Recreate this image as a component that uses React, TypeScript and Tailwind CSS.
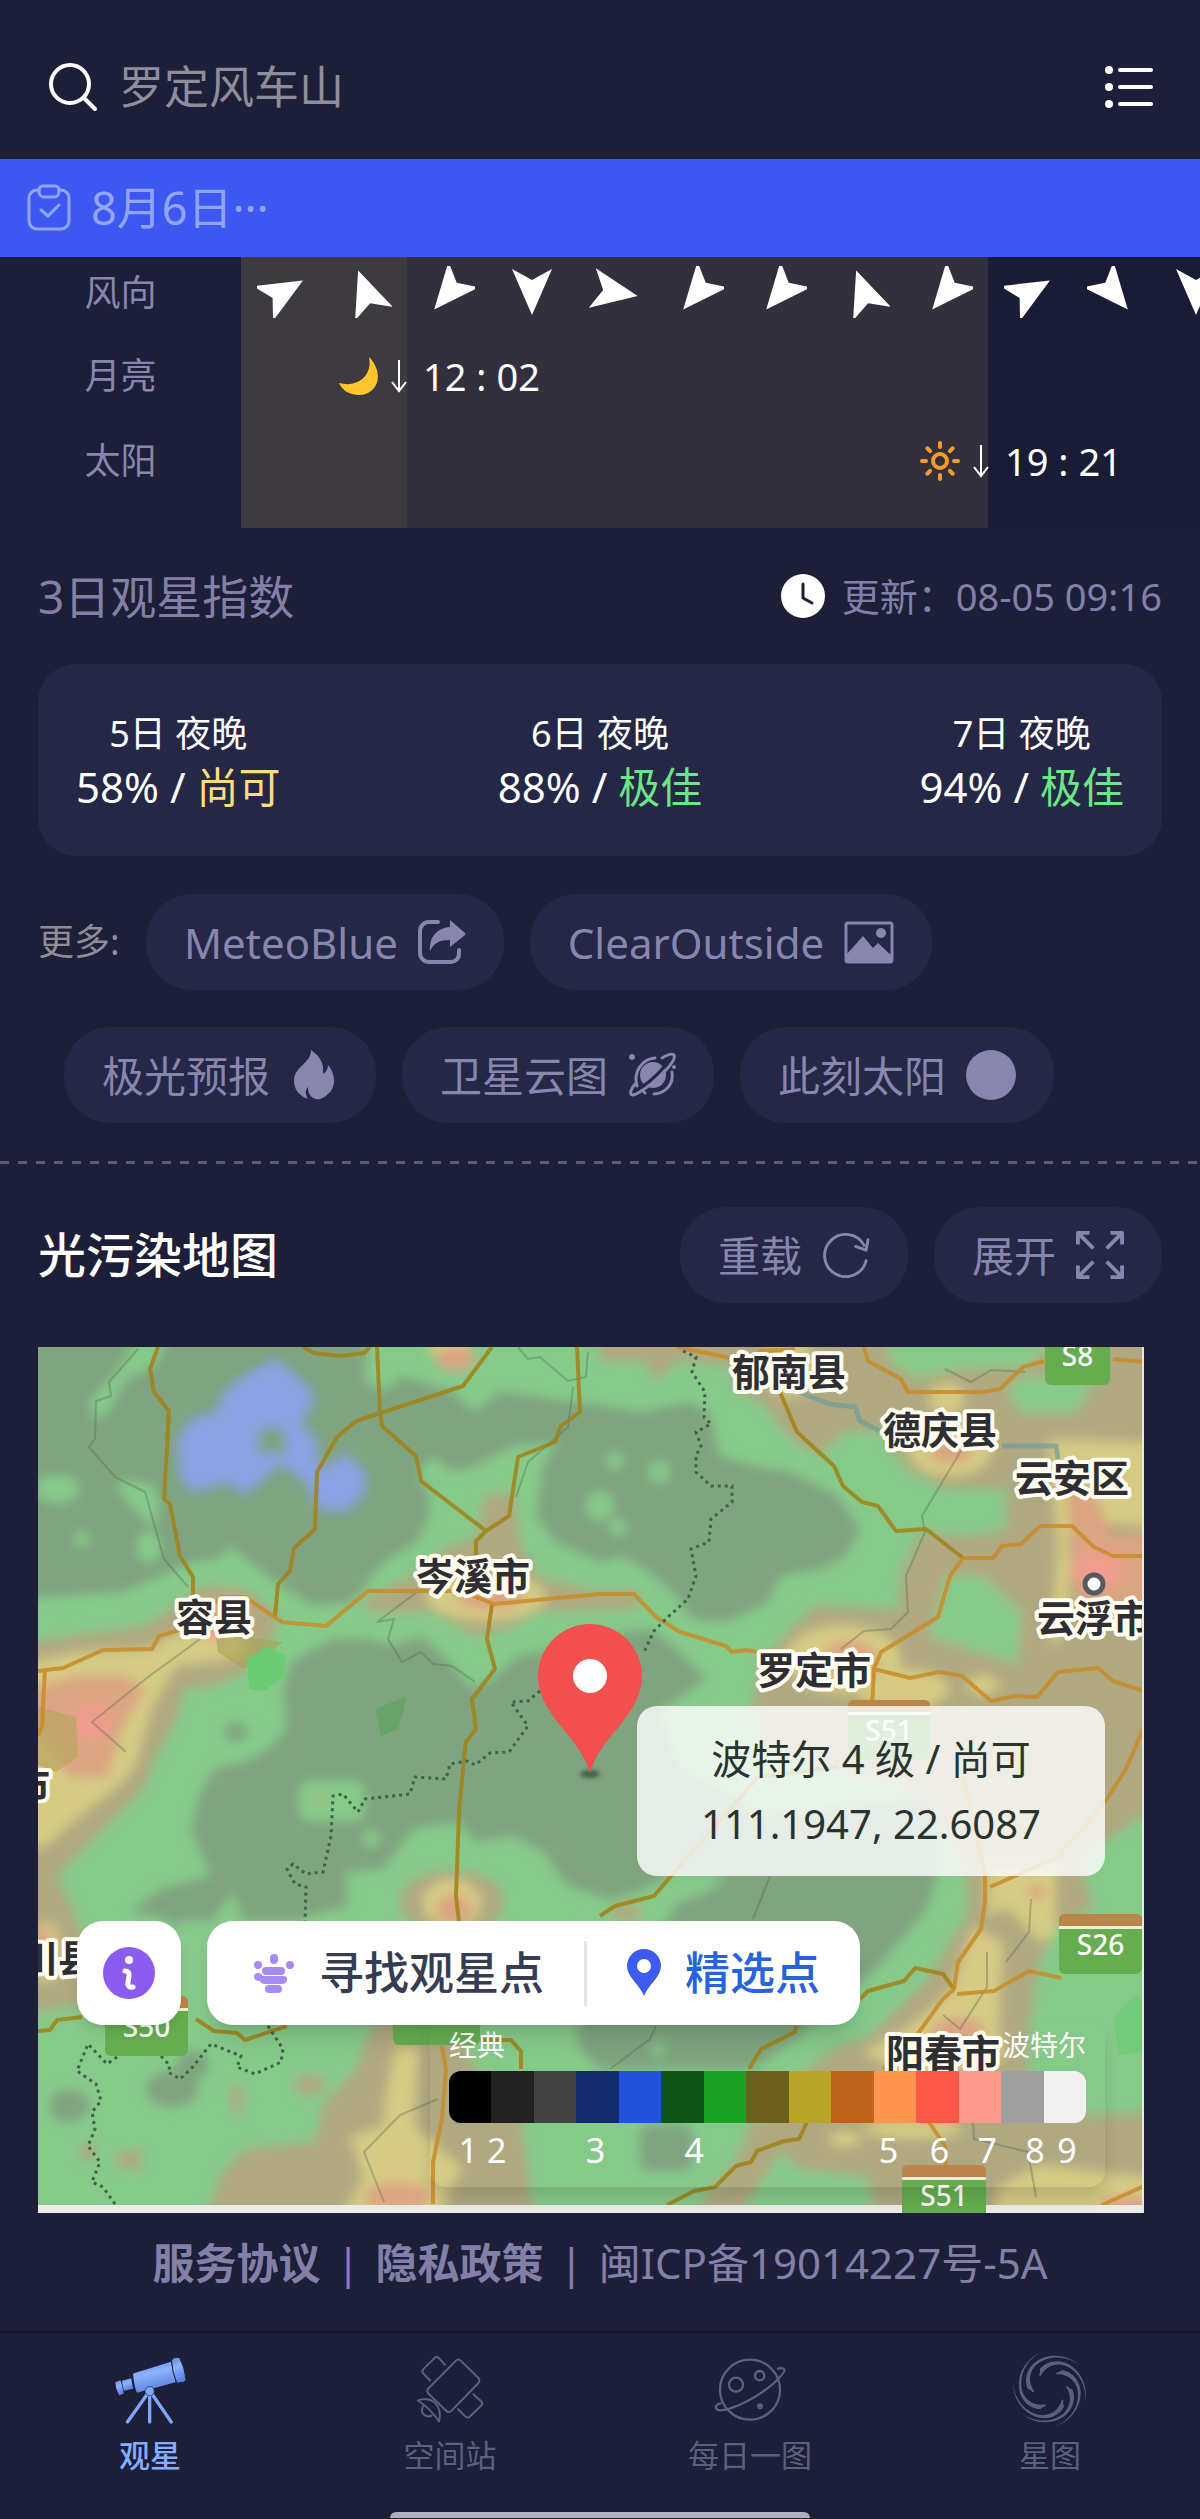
import type { ReactNode } from "react";

const COLUMN_COUNT = 12;
const WIND_DIRECTIONS = [60, -20, 220, 180, 100, 220, 220, -20, 220, 60, 140, 180];

type NightScore = {
  day: string;
  percent: number;
  rating: string;
  ratingClassName: string;
};

const NIGHT_SCORES: NightScore[] = [
  { day: "5日 夜晚", percent: 58, rating: "尚可", ratingClassName: "text-[#fddc80]" },
  { day: "6日 夜晚", percent: 88, rating: "极佳", ratingClassName: "text-[#6be585]" },
  { day: "7日 夜晚", percent: 94, rating: "极佳", ratingClassName: "text-[#6be585]" },
];

const LEGEND_COLORS = [
  "#000000",
  "#222222",
  "#424242",
  "#132c70",
  "#2252d8",
  "#0e5515",
  "#1da228",
  "#6b611c",
  "#b8a628",
  "#bf621a",
  "#ff954e",
  "#fc5848",
  "#fb998d",
  "#9f9f9f",
  "#f1f1f1",
];

const BORTLE_TICKS = [
  { level: 1, percent: 3 },
  { level: 2, percent: 7.5 },
  { level: 3, percent: 23 },
  { level: 4, percent: 38.5 },
  { level: 5, percent: 69 },
  { level: 6, percent: 77 },
  { level: 7, percent: 84.5 },
  { level: 8, percent: 92 },
  { level: 9, percent: 97 },
];

const MAP_LABELS = [
  { text: "郁南县", x: 694, y: 24 },
  { text: "德庆县", x: 845, y: 82 },
  { text: "云安区", x: 977, y: 130 },
  { text: "云浮市", x: 999, y: 270 },
  { text: "罗定市", x: 719, y: 322 },
  { text: "岑溪市", x: 378, y: 228 },
  { text: "容县", x: 138, y: 269 },
  { text: "阳春市", x: 848, y: 705 },
  { text: "市", x: -26, y: 437 },
  { text: "川县", x: -18, y: 610 },
];

const MAP_ROADS = [
  "120,0 112,22 116,45 131,64 126,152 132,157 142,209 155,230 155,255",
  "265,0 276,6 303,9 326,6 332,0",
  "339,0 342,65 344,79 378,109 383,134 448,184",
  "454,0 425,39 318,74 299,90 279,125 277,182 256,201 252,224 240,237 237,269",
  "539,0 542,65 523,79 517,95 480,110 471,169 448,184 438,194 438,215",
  "158,672 176,684 199,686 207,693 249,679",
  "454,257 449,292 457,322 434,352 438,382 428,395 425,422 421,465 418,549 421,574",
  "742,45 759,85 796,119 805,139 824,155 840,159 858,184 888,182 925,211",
  "822,652 830,644 866,634 877,621 905,627 916,642",
  "562,569 577,559 616,549 633,529 720,430 800,420",
  "758,679 757,685 723,702 711,722",
  "769,775 761,792 746,794 719,804 713,815 698,819 677,840 656,844 629,858",
  "442,693 473,693 483,704 483,722",
  "0,684 12,683 19,673 44,670",
];

const MAP_HIGHWAYS = [
  "0,324 25,321 65,303 114,302 121,289 138,284 173,259 184,250 207,250 244,275 288,279 330,244 422,244 456,257 562,247 596,247 618,270 642,285 688,299 694,305 708,303 731,307",
  "7,322 4,379 0,389",
  "925,211 955,211 964,199 983,197 1002,179 1034,179 1056,200 1075,209 1106,209",
  "925,211 912,229 900,270 843,305 836,322 872,331 901,325 924,329 953,354 976,349 999,350 1020,325 1060,321 1075,334 1106,344",
  "836,322 834,360",
  "639,0 688,10 742,45 719,14 723,4 757,2",
  "826,0 830,14 863,32 870,45 945,45 962,42 985,20 1006,14",
  "1075,12 1106,15",
  "925,430 947,529 947,555 943,582 920,615 916,642 905,652 878,689 845,722",
  "919,647 956,644 991,624 1023,631",
  "1106,380 1088,422 1069,452 1020,510 952,540",
  "891,775 907,799 908,818",
  "1064,858 1106,839",
  "404,699 408,722 404,772 395,815 395,857",
];

const MAP_BORDERS = [
  "645,4 658,10 654,25 667,45 666,70 673,77 658,85 663,99 658,109 658,125 673,139 694,139 694,155 673,172 671,195 653,202 658,229 650,252 631,269 616,284 606,305",
  "502,344 490,354 473,355 490,379 471,405 452,406 437,418 429,414 412,417 408,432 377,430 372,447 327,452 320,465 305,447 295,449 293,489 285,525 268,527 255,517 249,522 257,537 268,540 267,574",
  "230,679 245,702 243,715 217,727 199,720 203,709 173,697 153,722 142,732 130,725 132,719 123,709",
  "79,710 69,717 50,697 39,724 58,737 63,754 54,765 57,782 50,799 62,815 54,835 65,840 77,857",
];

const MAP_MINOR_LINES = [
  "100,2 71,35 73,49 58,54 57,92 51,100 77,130 107,145 126,212 150,240",
  "480,0 490,12 502,10 530,34 548,30 550,5",
  "535,40 530,80 490,115 478,150",
  "907,22 933,35 953,23 987,25",
  "924,102 884,169 887,185 868,229 870,265 853,282 826,284 803,302",
  "379,245 339,275 356,272 350,292 364,315 383,305 395,317 414,319 437,335",
  "88,405 54,375 110,330 165,290",
  "993,552 991,585 968,615",
  "949,605 949,640 922,682 905,668",
  "732,529 715,572",
  "618,679 612,692 572,722",
  "400,752 362,768 326,805 346,855",
  "935,775 936,792 990,805 998,850",
];

function LightPollutionMap() {
  return (
    <svg viewBox="0 0 1106 866" className="block h-auto w-full" role="img" aria-label="光污染地图">
      <defs>
        <filter id="soft" x="-10%" y="-10%" width="120%" height="120%">
          <feGaussianBlur stdDeviation="6" />
        </filter>
        <filter id="shade" x="-50%" y="-50%" width="200%" height="200%">
          <feGaussianBlur stdDeviation="2" />
        </filter>
      </defs>

      <rect width="1106" height="866" fill="#86ca8a" />

      <g filter="url(#soft)">
        <g fill="#80a380">
          <path d="M-20-20H330L326 35 345 45 364 29 414 45 437 65 460 45 498 49 530 55 562 58 600 65 654 55 673 69 681 109 715 119 753 125 799 149 822 182 807 209 784 222 742 229 730 255 688 275 654 272 639 249 616 229 585 209 562 215 517 195 498 169 506 115 521 95 475 99 437 119 414 125 395 109 379 125 391 149 391 169 379 195 345 215 314 255 276 259 253 245 230 229 192 199 180 212 153 215 123 229 85 245-20 252Z" />
          <path d="M295 292L330 292 356 299 383 289 406 309 433 342 452 335 479 309 521 302 562 289 608 282 627 292 669 332 639 352 619 365 640 420 730 470 900 450 899 529 887 565 861 595 838 622 790 660 761 690 715 722H562L544 705 536 682 640 600 562 549 529 539 506 505 475 489 437 495 421 475 375 482 345 522 307 525 310 559 268 569 260 590 150 600 130 572 92 565 123 542 173 529 153 482 161 449 176 422 207 415 230 402 249 382 245 342 253 315Z" />
          <ellipse cx="31" cy="759" rx="20" ry="16" />
          <ellipse cx="134" cy="742" rx="26" ry="18" />
          <ellipse cx="155" cy="718" rx="16" ry="14" />
          <rect x="602" y="778" width="52" height="46" rx="8" />
          <ellipse cx="198" cy="385" rx="12" ry="9" />
        </g>

        <g fill="#86ca8a">
          <path d="M100-10L130-10 118 18 88 32 68 68 54 72 52 55 78 25Z" />
          <ellipse cx="19" cy="142" rx="22" ry="14" />
          <path d="M78 132L115 138 122 160 116 182 100 165 85 150Z" />
          <ellipse cx="111" cy="200" rx="12" ry="16" />
          <circle cx="44" cy="192" r="8" />
          <circle cx="577" cy="114" r="9" />
          <circle cx="621" cy="125" r="11" />
          <circle cx="562" cy="159" r="14" />
          <circle cx="580" cy="180" r="9" />
          <rect x="261" y="434" width="66" height="40" rx="10" />
          <circle cx="333" cy="492" r="9" />
          <path d="M545 580L562 555 600 545 640 525 690 528 670 545 640 555 625 580Z" />
          <circle cx="620" cy="702" r="7" />
          <path d="M140 574H175L195 545 205 574H300V600H140Z" />
        </g>

        <g fill="#b0a880">
          <path d="M-20 296L107 279 153 249 161 239 207 242 238 265 238 285 207 325 176 339 146 342 138 375 115 415 107 440 58 489 19 529 38 569 60 655-20 668Z" />
          <path d="M445 149L475 145 483 195 498 229 562 245 600 243 600 262 498 265 471 282 437 289 395 265 326 265 330 249 376 229 406 202 441 189Z" />
          <path d="M692-20H1126V455L1075 489 1045 509V529L1056 560 1018 580 1000 620 990 690 990 770 1126 765V886H840L830 830 760 822 720 775 770 722 800 699 830 690 887 635 895 622 929 569V529L890 450 720 400 715 359 723 315 753 282 776 259 860 262 864 222 883 185 930 190 968 182V142H906L868 122 845 85H807L780 109 753 92 723 55 696 42Z" />
          <path d="M562-20H700V20L640 14 620 34 605 14 562 14Z" />
          <path d="M161 886L184 825 207 802 276 795 287 755 318 722 330 689 345 660H414L433 715 483 775 490 822 498 886Z" />
          <path d="M640 886L700 810 715 770 740 775 745 800 690 886Z" />
          <ellipse cx="414" cy="555" rx="52" ry="32" />
          <ellipse cx="588" cy="566" rx="16" ry="10" />
          <circle cx="280" cy="454" r="5" />
          <ellipse cx="272" cy="738" rx="16" ry="10" />
          <ellipse cx="199" cy="752" rx="6" ry="16" />
          <ellipse cx="92" cy="813" rx="14" ry="10" />
          <ellipse cx="50" cy="805" rx="8" ry="10" />
        </g>

        <g fill="#86ca8a">
          <path d="M845-20H1005V6L990 20 920 22 880 32 852 15Z" />
          <path d="M968 42L984 30H1056L1040 65H983Z" />
          <path d="M907 229H945L983 265 979 318 965 312 891 290 903 249Z" />
        </g>

        <g fill="#d5cb84">
          <path d="M-20 318L38 305 115 302 130 289 176 282 207 289 207 309 176 315 138 319 115 359 96 422 77 442 38 472 8 499-20 499Z" />
          <ellipse cx="8" cy="605" rx="16" ry="30" />
          <ellipse cx="448" cy="250" rx="60" ry="24" />
          <ellipse cx="412" cy="2" rx="20" ry="14" />
          <ellipse cx="909" cy="52" rx="18" ry="16" />
          <ellipse cx="912" cy="102" rx="42" ry="28" />
          <ellipse cx="752" cy="22" rx="26" ry="28" />
          <path d="M1010 92L1126 96V182L1060 175 1046 130 1030 130 1032 240 1024 290 1012 300 1020 200Z" />
          <ellipse cx="805" cy="312" rx="58" ry="34" />
          <ellipse cx="865" cy="342" rx="46" ry="20" />
          <ellipse cx="945" cy="338" rx="16" ry="10" />
          <path d="M949 520H1018V590L1002 595 968 560 950 570Z" />
          <path d="M935 580L965 595 960 690 970 710 880 735 825 705 870 680 912 645Z" />
          <ellipse cx="807" cy="792" rx="16" ry="8" />
          <ellipse cx="875" cy="782" rx="50" ry="10" />
          <path d="M960 840L1000 818 1126 832V886H960Z" />
          <path d="M358 700L380 700 376 780 392 792 425 822 410 842 405 886H296L325 830 312 790 345 778 348 745Z" />
          <ellipse cx="414" cy="556" rx="30" ry="24" />
        </g>

        <g fill="#dba482">
          <path d="M-20 345L38 329 88 329 107 342 84 382 69 430 31 430-20 365Z" />
          <ellipse cx="185" cy="268" rx="28" ry="16" />
          <ellipse cx="452" cy="248" rx="34" ry="14" />
          <ellipse cx="418" cy="12" rx="20" ry="12" />
          <path d="M1028 145H1056L1075 190 1126 186V240L1100 265 1042 262Z" />
          <ellipse cx="912" cy="104" rx="22" ry="12" />
          <ellipse cx="812" cy="314" rx="28" ry="20" />
          <ellipse cx="920" cy="684" rx="28" ry="13" />
          <ellipse cx="999" cy="545" rx="8" ry="8" />
          <ellipse cx="360" cy="850" rx="34" ry="14" />
          <ellipse cx="5" cy="602" rx="10" ry="20" />
          <ellipse cx="416" cy="562" rx="18" ry="14" />
          <ellipse cx="1090" cy="860" rx="30" ry="12" />
        </g>

        <g fill="#f09c8e">
          <circle cx="54" cy="374" r="18" />
          <ellipse cx="178" cy="284" rx="10" ry="10" />
          <ellipse cx="1058" cy="222" rx="26" ry="18" />
          <ellipse cx="812" cy="316" rx="14" ry="10" />
        </g>

        <path
          fill="#8ba2e4"
          d="M184 49L207 29 238 13 261 32 276 49 262 79 276 89 280 118 290 122 307 106 328 129 324 149 307 164 280 161 268 134 242 116 222 134 207 147 192 135 153 144 143 129 140 95 153 73 180 65Z"
        />
        <rect x="220" y="81" width="28" height="26" rx="5" fill="#80a380" />
      </g>

      <path fill="#b8a55f" opacity="0.7" d="M0 360L38 370 40 410 18 425 0 418Z" />
      <path fill="#a9a253" opacity="0.6" d="M178 290H206L245 295 225 312 205 322 180 305Z" />
      <path fill="#6bcb74" d="M209 312L230 299 247 309V329L226 344 211 342Z" />
      <path fill="#68a368" d="M337 362L368 350 366 362 360 382 343 389Z" />
      <path fill="#6bcb74" opacity="0.7" d="M1076 670L1096 648 1106 655V705L1080 708Z" />

      <g fill="none" stroke="#6f9f9c" strokeWidth="5" opacity="0.7">
        <polyline points="761,45 792,57 817,60 822,74 842,84" />
        <polyline points="964,99 1018,99 1020,112" />
      </g>
      <g fill="none" stroke="#4d6653" strokeWidth="2" opacity="0.35">
        {MAP_MINOR_LINES.map((points) => (
          <polyline key={points} points={points} />
        ))}
      </g>
      <g fill="none" stroke="#a18318" strokeWidth="4" strokeLinejoin="round" opacity="0.85">
        {MAP_ROADS.map((points) => (
          <polyline key={points} points={points} />
        ))}
      </g>
      <g fill="none" stroke="#c98c28" strokeWidth="4" strokeLinejoin="round" opacity="0.85">
        {MAP_HIGHWAYS.map((points) => (
          <polyline key={points} points={points} />
        ))}
      </g>
      <g fill="none" stroke="#3f6347" strokeWidth="3" strokeDasharray="3 4">
        {MAP_BORDERS.map((points) => (
          <polyline key={points} points={points} />
        ))}
      </g>

      <RoadShield x={1007} y={-22} code="S8" width={65} />
      <RoadShield x={810} y={353} code="S51" width={82} />
      <RoadShield x={1021} y={567} code="S26" width={83} />
      <RoadShield x={67} y={649} code="S50" width={83} />
      <RoadShield x={355} y={638} code="" width={87} />

      <circle cx="1056" cy="237" r="9" fill="#fff" stroke="#555a5e" strokeWidth="5" />
      <g
        fontSize="38"
        fontWeight="700"
        fill="#2f2f33"
        stroke="#fffdf0"
        strokeWidth="8"
        strokeLinejoin="round"
        style={{ paintOrder: "stroke" }}
        dominantBaseline="central"
      >
        {MAP_LABELS.map(({ text, x, y }) => (
          <text key={`${text}-${x}`} x={x} y={y}>
            {text}
          </text>
        ))}
      </g>

      <rect y="858" width="1106" height="8" fill="#ebebe7" />
      <RoadShield x={864} y={818} code="S51" width={84} />
      <rect x="1104" width="2" height="866" fill="#e6e8dc" />

      <ellipse cx="552" cy="427" rx="10" ry="4" fill="#3d6044" filter="url(#shade)" />
      <path
        d="M552 426C545 402 528 387 515 369 506 356 500 344 500 329A52 52 0 0 1 604 329C604 344 598 356 589 369 576 387 559 402 552 426Z"
        fill="#f24f4f"
      />
      <circle cx="552" cy="329" r="17" fill="#fff" />
    </svg>
  );
}

type RoadShieldProps = { x: number; y: number; width: number; code: string };

function RoadShield({ x, y, width, code }: RoadShieldProps) {
  return (
    <g>
      <rect x={x} y={y} width={width} height="60" rx="6" fill="#66ad50" />
      <path d={`M${x} ${y + 12}v-6q0-6 6-6h${width - 12}q6 0 6 6v6Z`} fill="#b9854a" />
      <rect x={x} y={y + 12} width={width} height="3" fill="#f1efd8" />
      <text x={x + width / 2} y={y + 30} fontSize="28" fontWeight="500" fill="#fff" textAnchor="middle" dominantBaseline="central">
        {code}
      </text>
    </g>
  );
}

function SearchIcon() {
  return (
    <svg viewBox="0 0 50 50" className="size-[50px]" fill="none" stroke="#fff" strokeWidth="4" strokeLinecap="round" aria-hidden="true">
      <circle cx="22" cy="22" r="19" />
      <path d="M36 36L47 47" />
    </svg>
  );
}

function MenuIcon() {
  return (
    <svg viewBox="0 0 50 46" className="h-[46px] w-[50px]" fill="#fff" aria-hidden="true">
      {[6, 23, 40].map((cy) => (
        <g key={cy}>
          <circle cx="5" cy={cy} r="4" />
          <rect x="14" y={cy - 2} width="35" height="4" rx="2" />
        </g>
      ))}
    </svg>
  );
}

function ClipboardIcon() {
  return (
    <svg viewBox="0 0 44 48" className="h-12 w-11" fill="none" stroke="#92a5fd" strokeWidth="3" strokeLinecap="round" strokeLinejoin="round" aria-hidden="true">
      <path d="M12 6H10a8 8 0 0 0-8 8v23a8 8 0 0 0 8 8h24a8 8 0 0 0 8-8V14a8 8 0 0 0-8-8h-2" />
      <path d="M16 2h12a4 4 0 0 1 4 4v2a5 5 0 0 1-5 5H17a5 5 0 0 1-5-5V6a4 4 0 0 1 4-4Z" />
      <path d="M14 26l7 6 11-11" />
    </svg>
  );
}

function WindArrow({ degrees }: { degrees: number }) {
  return (
    <svg viewBox="-26 -26 52 52" className="mx-auto size-[52px]" role="img" aria-label={`风向 ${degrees}°`}>
      <path d="M0-23L20 23 0 12-20 23Z" fill="#fff" transform={`rotate(${degrees})`} />
    </svg>
  );
}

function DownArrowIcon() {
  return (
    <svg viewBox="0 0 16 34" className="h-[34px] w-4" fill="none" stroke="#fff" strokeWidth="2" aria-hidden="true">
      <path d="M8 1V32M1 23l7 9 7-9" />
    </svg>
  );
}

function MoonIcon() {
  return (
    <svg viewBox="0 0 40 40" className="size-10" aria-hidden="true">
      <path d="M30 1C46 17 39 39 20 39 10 39 3 34 0 27 18 32 34 20 30 1Z" fill="#fdc62c" />
    </svg>
  );
}

function SunIcon() {
  return (
    <svg viewBox="-21 -21 42 42" className="size-[42px]" fill="none" stroke="#f9992b" strokeLinecap="round" aria-hidden="true">
      <circle r="7" strokeWidth="4" />
      {Array.from({ length: 8 }).map((_, index) => (
        <path key={index} d="M0-18v4" strokeWidth="4" transform={`rotate(${index * 45})`} />
      ))}
    </svg>
  );
}

function ClockIcon() {
  return (
    <svg viewBox="0 0 46 46" className="size-[46px]" aria-hidden="true">
      <circle cx="23" cy="23" r="22" fill="#fff" />
      <path d="M23 11v14l9 5" fill="none" stroke="#1d1e37" strokeWidth="3" strokeLinecap="round" strokeLinejoin="round" />
    </svg>
  );
}

function ShareIcon() {
  return (
    <svg viewBox="0 0 48 46" className="h-[46px] w-12" aria-hidden="true">
      <path d="M20 3H11a9 9 0 0 0-9 9v22a9 9 0 0 0 9 9h22a8 8 0 0 0 8-8v-4" fill="none" stroke="currentColor" strokeWidth="4" strokeLinecap="round" />
      <path d="M32 1L47 14Q48 15 47 16L32 28V21C21 21 16 24 12 32 11 18 19 9 32 8Z" fill="currentColor" />
    </svg>
  );
}

function ImageIcon() {
  return (
    <svg viewBox="0 0 50 43" className="h-[43px] w-[50px]" aria-hidden="true">
      <rect x="2" y="2" width="46" height="39" rx="2" fill="none" stroke="currentColor" strokeWidth="3" />
      <path d="M2 34L19 15 29 27 34 22 48 35V41H2Z" fill="currentColor" />
      <circle cx="37" cy="12" r="5" fill="currentColor" />
    </svg>
  );
}

function FlameIcon() {
  return (
    <svg viewBox="0 0 48 50" className="h-[50px] w-12" aria-hidden="true">
      <path
        d="M21 0C31 7 34 14 33 24 36 22 38 19 38 15 46 24 46 38 38 44 34 48 30 50 26 49 21 48 18 44 18 37 15 40 15 44 18 49 9 46 4 39 4 31 4 16 21 14 21 0Z"
        fill="currentColor"
      />
    </svg>
  );
}

function RingedPlanetIcon() {
  return (
    <svg viewBox="0 0 48 46" className="h-[46px] w-12" fill="none" stroke="currentColor" strokeWidth="3" strokeLinecap="round" aria-hidden="true">
      <circle cx="25" cy="23" r="13" fill="currentColor" stroke="none" />
      <path d="M9 34C5 20 14 7 27 6M34 6C39 3 44 1 46 3 49 9 32 25 19 35 11 41 4 45 3 42 2 40 4 36 7 32" />
      <path d="M44 20C46 32 38 41 26 42M17 41l-1-1" />
      <path d="M39 11C33 19 24 28 14 35" stroke="#242746" />
      <circle cx="4" cy="5" r="3" fill="currentColor" stroke="none" />
      <circle cx="46" cy="15" r="2" fill="currentColor" stroke="none" />
    </svg>
  );
}

function SolidDiscIcon() {
  return (
    <svg viewBox="0 0 50 50" className="size-[50px]" aria-hidden="true">
      <circle cx="25" cy="25" r="25" fill="currentColor" />
    </svg>
  );
}

function ReloadIcon() {
  return (
    <svg viewBox="0 0 50 48" className="h-[46px] w-12" fill="none" stroke="currentColor" strokeWidth="3" strokeLinecap="round" strokeLinejoin="round" aria-hidden="true">
      <path d="M46 30A22 22 0 1 1 44 14" />
      <path d="M48 8L46 19 35 15" />
    </svg>
  );
}

function ExpandIcon() {
  return (
    <svg viewBox="0 0 50 50" className="size-12" fill="none" stroke="currentColor" strokeWidth="4" strokeLinejoin="round" aria-hidden="true">
      <path d="M2 14V2H14M2 2L18 18M36 2H48V14M48 2L32 18M2 36V48H14M2 48L18 32M48 36V48H36M48 48L32 32" />
    </svg>
  );
}

function InfoIcon() {
  return (
    <svg viewBox="0 0 52 52" className="size-[52px]" aria-hidden="true">
      <circle cx="26" cy="26" r="26" fill="#8b5cf0" />
      <circle cx="26" cy="13" r="4" fill="#fff" />
      <path d="M22 24Q27 24 26 29L25 35Q24 41 30 40" fill="none" stroke="#fff" strokeWidth="5" strokeLinecap="round" strokeLinejoin="round" />
    </svg>
  );
}

function StarSpotIcon() {
  return (
    <svg viewBox="0 0 42 40" className="h-10 w-[42px]" fill="#a78bf5" aria-hidden="true">
      <rect x="17" y="1" width="8" height="10" rx="4" />
      <circle cx="5" cy="12" r="4" />
      <circle cx="37" cy="12" r="4" />
      <rect x="9" y="14" width="23" height="8" rx="4" />
      <path d="M5 20Q9 20 9 23H30Q35 23 34 27 33 31 29 31H12Q8 31 7 28 1 28 1 24 1 20 5 20Z" />
      <rect x="12" y="32" width="17" height="8" rx="4" />
    </svg>
  );
}

function SpotPinIcon() {
  return (
    <svg viewBox="0 0 34 48" className="h-12 w-[34px]" aria-hidden="true">
      <path d="M17 47C13 36 0 28 0 17A17 17 0 0 1 34 17C34 28 21 36 17 47ZM17 10A7 7 0 1 0 17 24 7 7 0 0 0 17 10Z" fill="#3d5af1" fillRule="evenodd" />
    </svg>
  );
}

function TelescopeIcon() {
  return (
    <svg viewBox="70 50 225 220" className="h-[73px] w-[75px]" aria-hidden="true">
      <defs>
        <linearGradient id="tube" x1="0" y1="0" x2="0.3" y2="1">
          <stop offset="0" stopColor="#5f86e0" />
          <stop offset="0.45" stopColor="#8db2ff" />
          <stop offset="1" stopColor="#5a80dc" />
        </linearGradient>
      </defs>
      <path d="M172 175L113 258M180 178V258M188 175L245 258" fill="none" stroke="#80a6f6" strokeWidth="10" strokeLinecap="round" />
      <path d="M130 112L244 76 258 138 142 170Q134 158 130 112Z" fill="url(#tube)" />
      <path d="M246 72Q250 62 262 63L270 64Q286 92 290 132L282 138 262 141Q248 112 246 72Z" fill="url(#tube)" stroke="#1d1e37" strokeWidth="3" />
      <path d="M96 134L124 126 130 158 102 164Z" fill="url(#tube)" />
      <path d="M76 138L92 132Q98 150 102 172L88 178Q78 160 76 138Z" fill="url(#tube)" />
      <circle cx="180" cy="165" r="14" fill="#80a6f6" stroke="#1d1e37" strokeWidth="2" />
    </svg>
  );
}

function SpaceStationIcon() {
  return (
    <svg viewBox="975 45 210 215" className="h-[72px] w-[70px]" fill="none" stroke="currentColor" strokeWidth="6" strokeLinecap="round" strokeLinejoin="round" aria-hidden="true">
      <path d="M1097 68Q1105 60 1113 68L1164 118Q1172 127 1164 136L1084 218Q1076 226 1068 217L1014 165Q1009 159 1015 151Z" />
      <path d="M1020 127L999 105Q995 99 1000 93L1034 59Q1040 54 1047 60L1065 80" />
      <path d="M1150 168L1175 191Q1179 197 1174 202L1139 236Q1133 240 1126 235L1104 213" />
      <path d="M984 187Q1010 176 1033 192 1056 215 1047 250 1040 238 1025 222 1010 205 984 187ZM1000 202Q990 220 1004 231 1014 238 1025 232" />
    </svg>
  );
}

function PlanetIcon() {
  return (
    <svg viewBox="100 50 225 210" className="h-[70px] w-[75px]" fill="none" stroke="currentColor" strokeWidth="7" strokeLinecap="round" aria-hidden="true">
      <circle cx="211" cy="157" r="90" />
      <circle cx="169" cy="142" r="21" />
      <circle cx="240" cy="115" r="14" />
      <circle cx="241" cy="207" r="9" fill="currentColor" stroke="none" />
      <path d="M122 198Q106 202 109 213 114 224 150 214 220 190 282 138 318 104 314 97 309 90 295 94" />
    </svg>
  );
}

function GalaxyIcon() {
  return (
    <svg viewBox="-120 -120 240 240" className="size-20" fill="currentColor" aria-hidden="true">
      {[-105, -40, 22, 82, 140, 190].map((degrees) => (
        <path
          key={degrees}
          d="M113 0C100-50 60-82 15-82-15-80-38-58-41-25-49-22-44-38-51-44-42-72-16-90 15-90 62-89 104-52 113 0Z"
          transform={`rotate(${degrees})`}
        />
      ))}
    </svg>
  );
}

type PillButtonProps = { label: string; children: ReactNode };

function PillButton({ label, children }: PillButtonProps) {
  return (
    <button type="button" className="flex h-24 items-center gap-5 rounded-[46px] bg-[#242746] px-[38px] text-[42px] text-[#8886ae]">
      <span>{label}</span>
      {children}
    </button>
  );
}

function ForecastTable() {
  return (
    <div className="overflow-hidden">
      <table className="w-[1237px] table-fixed border-collapse bg-[linear-gradient(90deg,transparent_0_241px,#3d3b3f_241px_407px,#32303c_407px_988px,#1a1c36_988px)] text-[38px] leading-none text-white">
        <colgroup>
          <col className="w-[241px]" />
          <col span={COLUMN_COUNT} />
        </colgroup>
        <tbody>
          <tr className="h-[77px]">
            <th scope="row" className="pb-1.5 text-[36px] font-normal text-[#8886ae]">
              风向
            </th>
            {WIND_DIRECTIONS.map((degrees, index) => (
              <td key={index} className="p-0 pb-2">
                <WindArrow degrees={degrees} />
              </td>
            ))}
          </tr>
          <tr className="h-[84px]">
            <th scope="row" className="text-[36px] font-normal text-[#8886ae]">
              月亮
            </th>
            <td colSpan={COLUMN_COUNT} className="p-0 pl-[98px]">
              <div className="flex items-center">
                <MoonIcon />
                <span className="ml-3 mr-4">
                  <DownArrowIcon />
                </span>
                <span>12 : 02</span>
              </div>
            </td>
          </tr>
          <tr className="h-[110px]">
            <th scope="row" className="pb-6 text-[36px] font-normal text-[#8886ae]">
              太阳
            </th>
            <td colSpan={COLUMN_COUNT} className="p-0 pb-6 pl-[678px]">
              <div className="flex items-center">
                <SunIcon />
                <span className="ml-3 mr-4">
                  <DownArrowIcon />
                </span>
                <span>19 : 21</span>
              </div>
            </td>
          </tr>
        </tbody>
      </table>
    </div>
  );
}

function BortleLegend() {
  return (
    <div className="absolute bottom-[26px] right-[39px] w-[675px] rounded-2xl px-[19px] pb-3 text-white shadow-[0_12px_16px_rgba(0,0,0,0.12)]">
      <div className="flex justify-between text-[28px] leading-[52px]">
        <span>经典</span>
        <span>波特尔</span>
      </div>
      <div className="flex h-[52px] overflow-hidden rounded-xl">
        {LEGEND_COLORS.map((color) => (
          <span key={color} className="flex-1" style={{ backgroundColor: color }} />
        ))}
      </div>
      <div className="relative h-[52px] text-[34px] leading-[54px]">
        {BORTLE_TICKS.map(({ level, percent }) => (
          <span key={level} className="absolute -translate-x-1/2" style={{ left: `${percent}%` }}>
            {level}
          </span>
        ))}
      </div>
    </div>
  );
}

function MapPanel() {
  return (
    <div className="relative ml-[38px] mr-14 mt-11 overflow-hidden">
      <LightPollutionMap />
      <BortleLegend />

      <div className="absolute right-[39px] top-[359px] w-[468px] rounded-[20px] bg-white/80 py-5 text-center text-[40px] leading-[65px] text-[#29342f]">
        <p>波特尔 4 级 / 尚可</p>
        <p>111.1947, 22.6087</p>
      </div>

      <div className="absolute bottom-[188px] left-[39px] flex gap-[26px] text-[45px] font-medium">
        <button type="button" aria-label="说明" className="flex size-[104px] items-center justify-center rounded-[26px] bg-white shadow-lg">
          <InfoIcon />
        </button>
        <div className="flex h-[104px] items-center rounded-[26px] bg-white shadow-xl">
          <button type="button" className="flex items-center gap-6 pl-[46px] pr-10 text-[#363c52]">
            <StarSpotIcon />
            <span>寻找观星点</span>
          </button>
          <span className="h-[65px] w-[3px] bg-[#e4e4e6]" />
          <button type="button" className="flex items-center gap-6 px-10 text-[#2663dc]">
            <SpotPinIcon />
            <span>精选点</span>
          </button>
        </div>
      </div>
    </div>
  );
}

type TabLinkProps = { label: string; active?: boolean; children: ReactNode };

function TabLink({ label, active = false, children }: TabLinkProps) {
  return (
    <a
      href="#"
      aria-current={active ? "page" : undefined}
      className={`flex flex-1 flex-col items-center text-[31px] leading-9 ${active ? "font-medium text-[#85adff]" : "text-[#59617d]"}`}
    >
      <span className="flex h-20 items-center">{children}</span>
      <span className="mt-2">{label}</span>
    </a>
  );
}

export default function App() {
  return (
    <div className="min-h-screen bg-[#1d1e37] font-['Noto_Sans','Noto_Sans_CJK_SC',sans-serif]">
      <header className="flex h-[159px] items-center justify-between px-12 pt-3.5">
        <label className="flex flex-1 items-center gap-[21px]">
          <SearchIcon />
          <input
            type="search"
            aria-label="搜索地点"
            placeholder="罗定风车山"
            className="h-16 min-w-0 flex-1 bg-transparent text-[45px] leading-none text-white outline-none placeholder:text-[#8e8e9b]"
          />
        </label>
        <button type="button" aria-label="菜单" className="-mr-0.5">
          <MenuIcon />
        </button>
      </header>

      <div className="flex h-[98px] items-center gap-5 bg-[#3d57f2] px-[27px] text-[45px] text-[#92a5fd]">
        <ClipboardIcon />
        <span>8月6日···</span>
      </div>

      <ForecastTable />

      <main>
        <section className="px-[38px]">
          <div className="flex h-[136px] items-center justify-between text-[#8280a8]">
            <h2 className="text-[46px]">3日观星指数</h2>
            <p className="flex items-center gap-4 text-[38px]">
              <ClockIcon />
              <span>更新：08-05 09:16</span>
            </p>
          </div>
          <ul className="flex justify-between rounded-[38px] bg-[#242746] px-[38px] py-[43px] text-center text-white">
            {NIGHT_SCORES.map(({ day, percent, rating, ratingClassName }) => (
              <li key={day}>
                <p className="text-[36px] leading-[53px]">{day}</p>
                <p className="text-[42px] leading-[53px]">
                  {percent}% / <span className={ratingClassName}>{rating}</span>
                </p>
              </li>
            ))}
          </ul>
          <div className="flex flex-wrap items-center gap-x-[26px] gap-y-[37px] py-[38px]">
            <span className="-mr-1 w-[86px] whitespace-nowrap text-[36px] text-[#8e8d95]">更多:</span>
            <PillButton label="MeteoBlue">
              <ShareIcon />
            </PillButton>
            <PillButton label="ClearOutside">
              <ImageIcon />
            </PillButton>
            <div className="flex w-full gap-[26px] pl-[26px]">
              <PillButton label="极光预报">
                <FlameIcon />
              </PillButton>
              <PillButton label="卫星云图">
                <RingedPlanetIcon />
              </PillButton>
              <PillButton label="此刻太阳">
                <SolidDiscIcon />
              </PillButton>
            </div>
          </div>
        </section>

        <div className="h-[3px] bg-[repeating-linear-gradient(90deg,#5b5c70_0_9px,transparent_9px_18px)]" />

        <section>
          <div className="flex items-center justify-between px-[38px] pt-[43px]">
            <h2 className="text-[48px] font-medium text-white">光污染地图</h2>
            <div className="flex gap-[26px]">
              <PillButton label="重载">
                <ReloadIcon />
              </PillButton>
              <PillButton label="展开">
                <ExpandIcon />
              </PillButton>
            </div>
          </div>
          <MapPanel />
        </section>
      </main>

      <footer className="flex h-[118px] items-center justify-center gap-4 whitespace-nowrap pb-5 text-[42px] text-[#8280a8]">
        <a href="#" className="font-bold">
          服务协议
        </a>
        <span>|</span>
        <a href="#" className="font-bold">
          隐私政策
        </a>
        <span>|</span>
        <a href="#">闽ICP备19014227号-5A</a>
      </footer>

      <nav className="border-t-2 border-[#14152b] pt-4">
        <div className="flex">
          <TabLink label="观星" active>
            <TelescopeIcon />
          </TabLink>
          <TabLink label="空间站">
            <SpaceStationIcon />
          </TabLink>
          <TabLink label="每日一图">
            <PlanetIcon />
          </TabLink>
          <TabLink label="星图">
            <GalaxyIcon />
          </TabLink>
        </div>
        <div className="mx-auto mt-[39px] h-1.5 w-[420px] rounded-t-md bg-[#b0b0ba]" />
      </nav>
    </div>
  );
}
